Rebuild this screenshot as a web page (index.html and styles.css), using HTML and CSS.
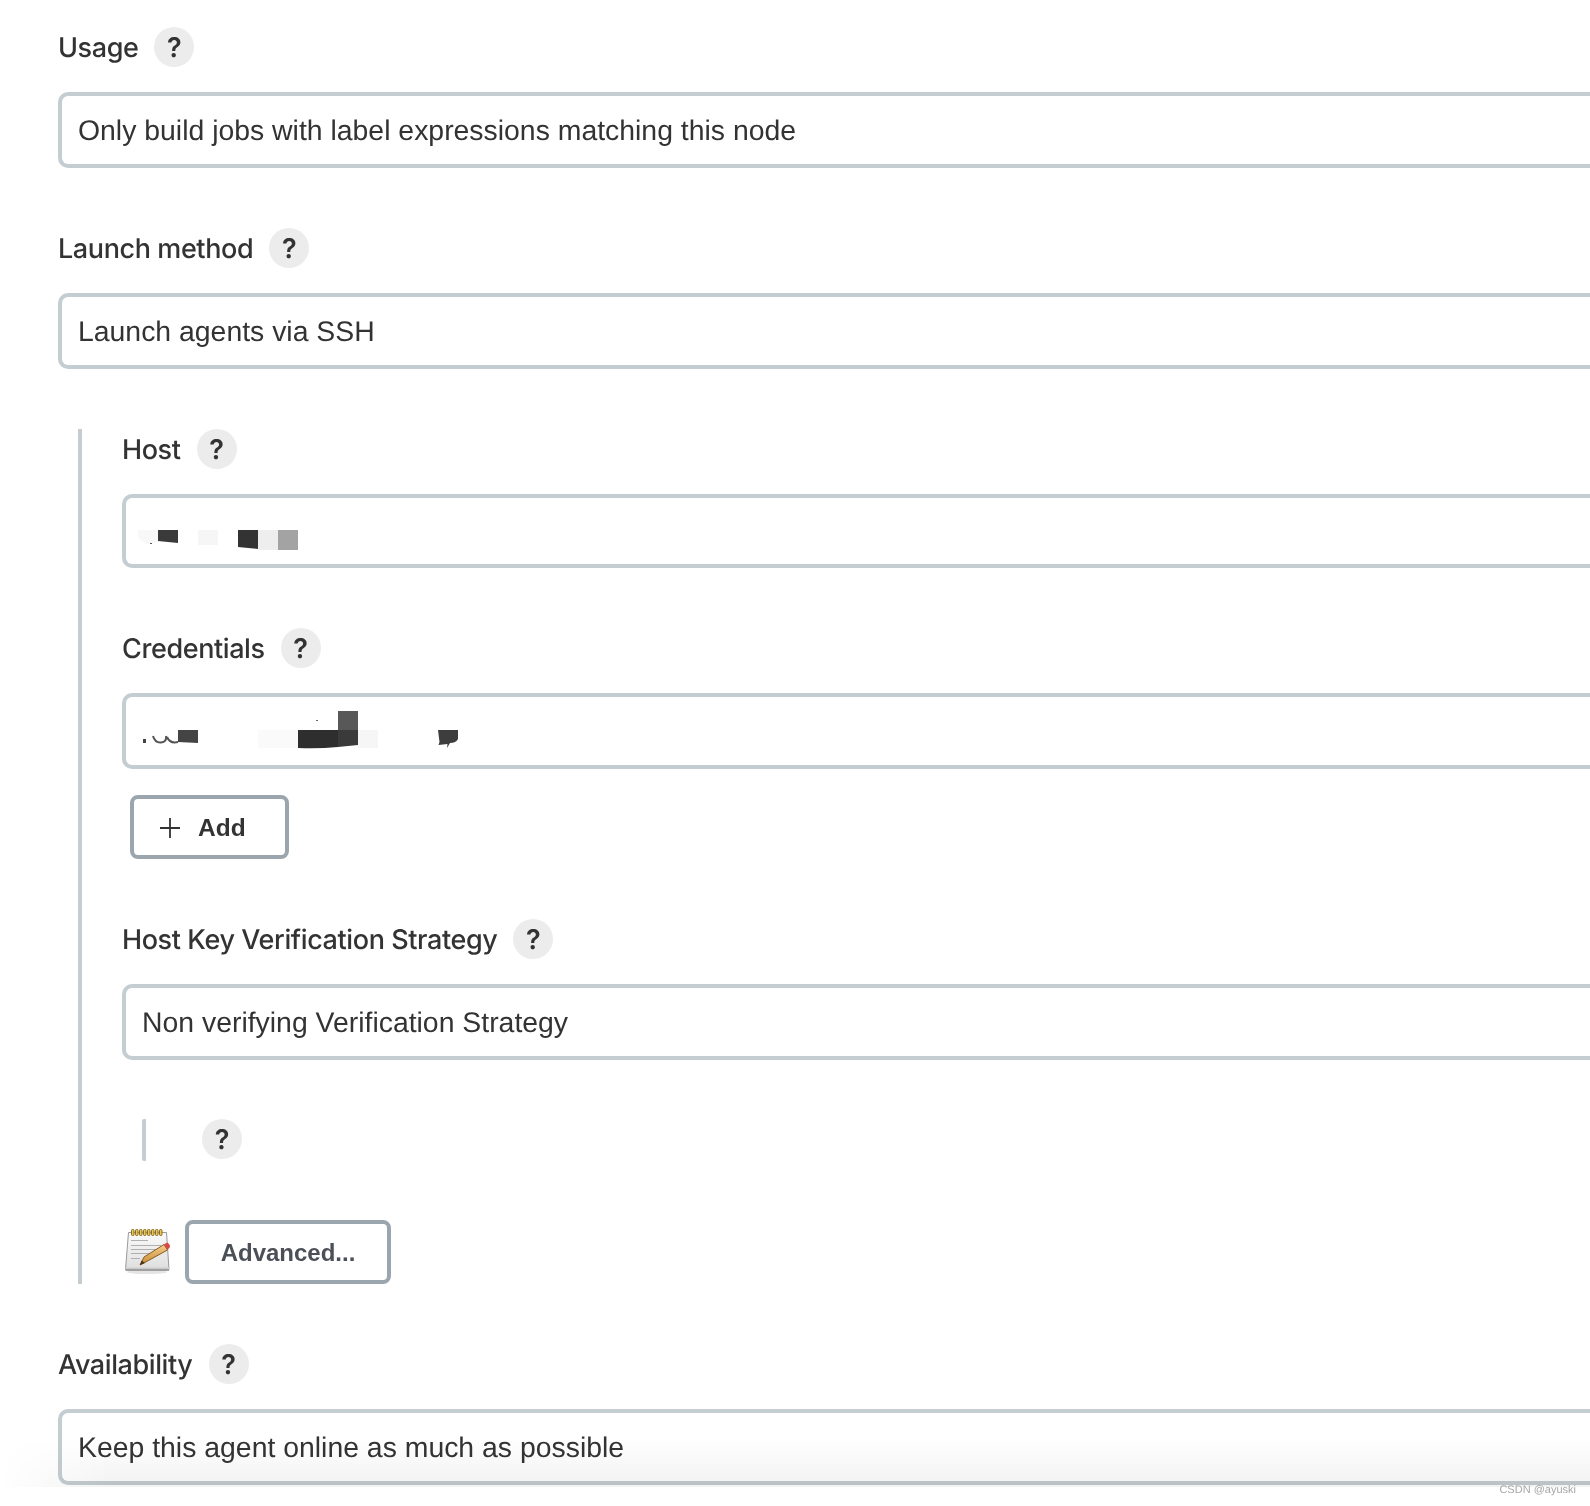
FILE: index.html
```html
<!DOCTYPE html>
<html lang="en">
<head>
  <meta charset="UTF-8" />
  <title>Agent configuration</title>
  <link rel="stylesheet" href="styles.css">
</head>
<body>
  <div class="page">
    <div class="entry">
      <div class="label-row"><span class="label">Usage</span><span class="help">?</span></div>
      <div class="field">Only build jobs with label expressions matching this node</div>
    </div>

    <div class="entry">
      <div class="label-row"><span class="label">Launch method</span><span class="help">?</span></div>
      <div class="field">Launch agents via SSH</div>
    </div>

    <div class="nested">
      <div class="entry">
        <div class="label-row"><span class="label">Host</span><span class="help">?</span></div>
        <div class="field field-short">
          <!-- pixelated value -->
          <svg class="mosaic" width="200" height="40" viewBox="0 0 200 40">
            <path d="M0 19h20v12l-12 2-8-6z" fill="#f8f8f8"/>
            <rect x="12" y="32" width="2" height="1" fill="#555"/>
            <path d="M20 19h20v13l-20-2z" fill="#3a3a3a"/>
            <rect x="60" y="19" width="20" height="15" fill="#f6f6f6"/>
            <path d="M100 19h20v19l-20-2z" fill="#333"/>
            <path d="M120 19h20v20h-20z" fill="#eeeeee"/>
            <rect x="140" y="19" width="20" height="20" fill="#a3a3a3"/>
          </svg>
        </div>
      </div>

      <div class="entry">
        <div class="label-row"><span class="label">Credentials</span><span class="help">?</span></div>
        <div class="field">
          <svg class="mosaic" width="340" height="40" viewBox="0 0 340 40">
            <rect x="5" y="28" width="3" height="4" fill="#444"/>
            <path d="M15 25q2 7 8 6.500t5-6.500M29 26q3 7 11 5" fill="none" stroke="#555" stroke-width="2"/>
            <path d="M40 19h20v13l-20-1z" fill="#444"/>
            <rect x="120" y="19" width="40" height="18" fill="#fafafa"/>
            <path d="M160 19h40v17q-20 2-40 1z" fill="#2e2e2e"/>
            <rect x="200" y="0" width="20" height="19" fill="#585858"/>
            <path d="M200 19h20v15l-20 2z" fill="#3a3a3a"/>
            <rect x="220" y="19" width="20" height="18" fill="#f6f6f6"/>
            <rect x="178" y="9" width="2" height="1" fill="#666"/>
            <path d="M300 19h20v9q-2 4-8 4l-3 5 .5-4-9 1 1-3z" fill="#3d3d3d"/>
          </svg>
        </div>
        <button class="btn btn-add">
          <svg class="plus" width="20" height="20" viewBox="0 0 20 20"><path d="M10 0v20M0 10h20" stroke="#333" stroke-width="1.8"/></svg>
          Add
        </button>
      </div>

      <div class="entry">
        <div class="label-row"><span class="label">Host Key Verification Strategy</span><span class="help">?</span></div>
        <div class="field">Non verifying Verification Strategy</div>
      </div>

      <div class="sub-option">
        <span class="help">?</span>
      </div>

      <div class="advanced-row">
        <svg class="notepad" width="48" height="46" viewBox="0 0 48 46">
          <defs>
            <linearGradient id="padFill" x1="0" y1="0" x2="0" y2="1">
              <stop offset="0" stop-color="#fbfbfb"/>
              <stop offset="1" stop-color="#dedede"/>
            </linearGradient>
            <linearGradient id="pencilFill" x1="0" y1="0" x2="0" y2="1">
              <stop offset="0" stop-color="#f3cf8c"/>
              <stop offset="1" stop-color="#c68a34"/>
            </linearGradient>
          </defs>
          <ellipse cx="23" cy="44" rx="20" ry="2" fill="#e4e4e4"/>
          <path d="M4.500 4.500h38l2.500 37H1.500z" fill="url(#padFill)" stroke="#9a9a9a" stroke-width="1"/>
          <path d="M1.500 39.500h43.500V43H1.500z" fill="#a0a0a0"/>
          <path d="M1.500 39.500h43.500v1H1.500z" fill="#f0f0f0"/>
          <g fill="#e8c65a" stroke="#8a6d1c" stroke-width="1">
            <rect x="7.500" y="1.500" width="2.500" height="6" rx="1"/>
            <rect x="11.500" y="1.500" width="2.500" height="6" rx="1"/>
            <rect x="15.500" y="1.500" width="2.500" height="6" rx="1"/>
            <rect x="19.500" y="1.500" width="2.500" height="6" rx="1"/>
            <rect x="23.500" y="1.500" width="2.500" height="6" rx="1"/>
            <rect x="27.500" y="1.500" width="2.500" height="6" rx="1"/>
            <rect x="31.500" y="1.500" width="2.500" height="6" rx="1"/>
            <rect x="35.500" y="1.500" width="2.500" height="6" rx="1"/>
          </g>
          <path d="M7 12.500h17M7 17.500h30M7 21.500h26M7 25.500h20M7 30.500h9" stroke="#b0b0b0" stroke-width="1"/>
          <path d="M20 29l20-12.500 3.500 5.500-19 10.500-8.500 4.500z" fill="url(#pencilFill)" stroke="#8a5a1c" stroke-width="1"/>
          <path d="M16 37l1.500-4.500 3.500 2.500z" fill="#4a3418"/>
          <path d="M40 16.500l3-2q3 1 3 4.500l-2.500 3z" fill="#d94848"/>
        </svg>
        <button class="btn btn-advanced">Advanced...</button>
      </div>
    </div>

    <div class="entry">
      <div class="label-row"><span class="label">Availability</span><span class="help">?</span></div>
      <div class="field">Keep this agent online as much as possible</div>
    </div>

    <div class="bottom-fade"></div>
    <div class="watermark">CSDN @ayuski</div>
  </div>
</body>
</html>
```

FILE: styles.css
```css
* {
  box-sizing: border-box;
  margin: 0;
  padding: 0;
}

html,
body {
  height: 1506px;
  overflow: hidden;
  background: #fff;
}

body {
  font-family: "Liberation Sans", Arial, sans-serif;
  color: #333;
  text-rendering: geometricPrecision;
}

.page {
  position: relative;
  height: 1506px;
  padding: 27px 0 0 58px;
}

.entry {
  margin-bottom: 60px;
}

.label-row {
  display: flex;
  align-items: center;
  height: 40px;
  margin-bottom: 25px;
}

.label {
  font-family: "Inter", "Liberation Sans", sans-serif;
  font-size: 27px;
  font-weight: 500;
  letter-spacing: -0.4px;
  margin-right: 16px;
}

.help {
  display: flex;
  align-items: center;
  justify-content: center;
  width: 40px;
  height: 40px;
  padding-top: 1px;
  border-radius: 50%;
  background: #ececec;
  font-family: "Inter", "Liberation Sans", sans-serif;
  font-size: 27px;
  font-weight: 600;
}

/* selects run off the right edge of the shot */
.field {
  display: flex;
  align-items: center;
  height: 76px;
  padding: 2px 0 0 16px;
  border: 4px solid #c4cdd1;
  border-right: none;
  border-radius: 10px 0 0 10px;
  background: #fff;
  font-size: 28.4px;
  color: #333;
}

.field-short {
  height: 74px;
}

.mosaic {
  display: block;
  flex: none;
  margin: -2px 0 0 -4px;
  overflow: visible;
}

.nested {
  margin: 59px 0 60px 20px;
  padding-left: 40px;
  border-left: 4px solid #c4cdd1;
}

.btn {
  display: flex;
  align-items: center;
  padding-top: 1px;
  border: 4px solid #9aa5ad;
  border-radius: 8px;
  background: #fff;
  font-family: "Liberation Sans", Arial, sans-serif;
  font-weight: bold;
}

.btn-add {
  gap: 18px;
  width: 159px;
  height: 64px;
  margin: 26px 0 0 8px;
  padding-left: 26px;
  font-size: 24.5px;
  color: #333;
}

.btn-advanced {
  justify-content: center;
  width: 206px;
  height: 64px;
  font-size: 24px;
  color: #4b5058;
}

.sub-option {
  display: flex;
  height: 42px;
  margin: -1px 0 59px 20px;
  padding-left: 56px;
  border-left: 4px solid #c4cdd1;
  border-radius: 2px;
}

.advanced-row {
  display: flex;
  align-items: flex-end;
  gap: 13px;
  padding-left: 2px;
}

.notepad {
  margin-bottom: 10px;
}

/* grey shade along the bottom of the shot, darkens what is under it */
.bottom-fade {
  position: absolute;
  left: 0;
  right: 0;
  top: 1437px;
  height: 50px;
  background: linear-gradient(to bottom, #fff, #f2f2f2);
  mix-blend-mode: multiply;
  -webkit-mask-image: linear-gradient(to right, transparent, #000 110px);
  mask-image: linear-gradient(to right, transparent, #000 110px);
  pointer-events: none;
}

.watermark {
  position: absolute;
  right: 14px;
  top: 1484px;
  font-size: 11px;
  color: #a6a6a6;
}
```
